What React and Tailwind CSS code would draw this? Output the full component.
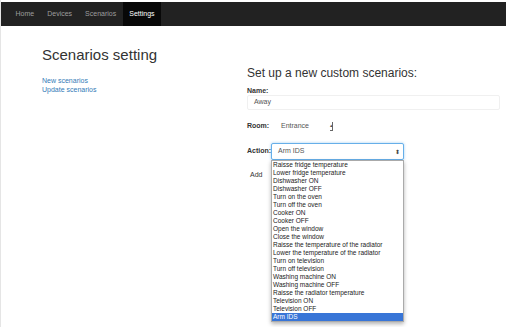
export default function App() {
  const items = [
    "Raisse fridge temperature",
    "Lower fridge temperature",
    "Dishwasher ON",
    "Dishwasher OFF",
    "Turn on the oven",
    "Turn off the oven",
    "Cooker ON",
    "Cooker OFF",
    "Open the window",
    "Close the window",
    "Raisse the temperature of the radiator",
    "Lower the temperature of the radiator",
    "Turn on television",
    "Turn off television",
    "Washing machine ON",
    "Washing machine OFF",
    "Raisse the radiator temperature",
    "Television ON",
    "Television OFF",
    "Arm IDS",
  ];
  return (
    <div className="w-[506px] h-[327px] overflow-hidden bg-white border-l border-[#e5e5e5] pt-[2px] relative" style={{ fontFamily: '"Liberation Sans", Arial, sans-serif' }}>
      <nav className="h-[24px] bg-[#222] flex items-stretch pl-[8px] text-[7px] text-[#9d9d9d]">
        <span className="px-[6.5px] flex items-center">Home</span>
        <span className="px-[6.5px] flex items-center">Devices</span>
        <span className="px-[6.5px] flex items-center">Scenarios</span>
        <span className="px-[6.5px] flex items-center bg-[#080808] text-white">Settings</span>
      </nav>
      <div className="flex">
        <div className="pl-[41px] w-[246px] shrink-0">
          <h1 className="mt-[20px] text-[15px] leading-[18px] text-[#333]">Scenarios setting</h1>
          <div className="mt-[12px] flex flex-col text-[7px] leading-[9px] text-[#337ab7]">
            <span>New scenarios</span>
            <span>Update scenarios</span>
          </div>
        </div>
        <div className="flex-1 pr-[6px]">
          <h2 className="mt-[40px] text-[12px] leading-[15px] text-[#333] font-medium">Set up a new custom scenarios:</h2>
          <div className="mt-[5px] text-[7px] font-bold text-[#333] leading-[9px]">Name:</div>
          <div className="mt-[0px] h-[15px] border border-[#f0f0f0] rounded-[2px] flex items-center pl-[6px] text-[7px] text-[#555]">Away</div>
          <div className="mt-[7px] flex items-center">
            <span className="text-[7px] font-bold text-[#333] w-[29px]">Room:</span>
            <div className="w-[60px] h-[18px] flex items-center justify-between pl-[5px] pr-[3px] text-[7px] text-[#555] bg-white">
              <span>Entrance</span>
              <span className="w-[3px] h-[9px] border-r border-b border-[#666] flex items-center justify-center text-[5px] leading-none">▴</span>
            </div>
          </div>
          <div className="mt-[8px] flex items-center relative">
            <span className="text-[7px] font-bold text-[#333] w-[24px]">Action:</span>
            <div className="w-[133px] h-[17px] flex items-center justify-between pl-[6px] pr-[3px] text-[7px] text-[#555] bg-white border border-[#66afe9] rounded-[2px] shadow-[0_0_3px_rgba(102,175,233,0.6)]">
              <span>Arm IDS</span>
              <span className="text-[6px] leading-none text-[#444]">⬍</span>
            </div>
            <div className="absolute left-[24px] top-[17px] w-[133px] bg-white border border-[#aaa] shadow-[0_2px_4px_rgba(0,0,0,0.3)] flex flex-col text-[6.5px] leading-[8px] text-[#222] z-10">
              {items.map((it, i) => (
                <span key={i} className={i === items.length - 1 ? "bg-[#3875d7] text-white pl-[1px]" : "pl-[1px]"}>{it}</span>
              ))}
            </div>
          </div>
          <div className="mt-[10px] pl-[3px] text-[7px] text-[#333]">Add</div>
        </div>
      </div>
    </div>
  );
}
